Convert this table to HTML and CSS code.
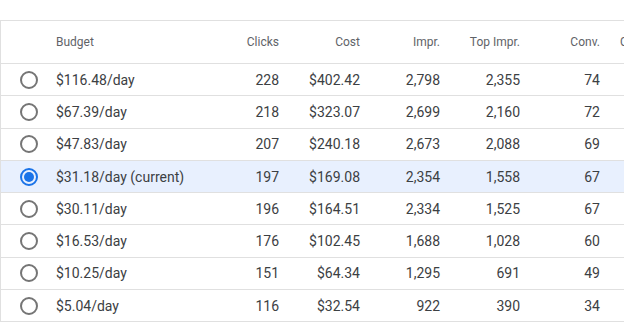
FILE: index.html
```html
<!DOCTYPE html>
<html lang="en">
<head>
    <meta charset="UTF-8">
    <title>Budget simulator</title>
    <link rel="stylesheet" href="styles.css">
</head>
<body>

<div class="card">
    <table class="budget-table">
        <colgroup>
            <col class="c-radio">
            <col class="c-budget">
            <col class="c-num">
            <col class="c-cost">
            <col class="c-num">
            <col class="c-num">
            <col class="c-num">
            <col class="c-last">
        </colgroup>
        <thead>
            <tr>
                <th></th>
                <th class="left">Budget</th>
                <th>Clicks</th>
                <th>Cost</th>
                <th>Impr.</th>
                <th>Top Impr.</th>
                <th>Conv.</th>
                <th class="left peek">Cost / conv.</th>
            </tr>
        </thead>
        <tbody>
            <tr>
                <td class="radio-cell"><svg class="radio" viewBox="0 0 20 20"><circle cx="10" cy="10" r="8"/></svg></td>
                <td class="left">$116.48/day</td>
                <td>228</td><td>$402.42</td><td>2,798</td><td>2,355</td><td>74</td><td></td>
            </tr>
            <tr>
                <td class="radio-cell"><svg class="radio" viewBox="0 0 20 20"><circle cx="10" cy="10" r="8"/></svg></td>
                <td class="left">$67.39/day</td>
                <td>218</td><td>$323.07</td><td>2,699</td><td>2,160</td><td>72</td><td></td>
            </tr>
            <tr>
                <td class="radio-cell"><svg class="radio" viewBox="0 0 20 20"><circle cx="10" cy="10" r="8"/></svg></td>
                <td class="left">$47.83/day</td>
                <td>207</td><td>$240.18</td><td>2,673</td><td>2,088</td><td>69</td><td></td>
            </tr>
            <tr class="selected">
                <td class="radio-cell"><svg class="radio checked" viewBox="0 0 20 20"><circle cx="10" cy="10" r="8"/><circle class="dot" cx="10" cy="10" r="5"/></svg></td>
                <td class="left">$31.18/day (current)</td>
                <td>197</td><td>$169.08</td><td>2,354</td><td>1,558</td><td>67</td><td></td>
            </tr>
            <tr>
                <td class="radio-cell"><svg class="radio" viewBox="0 0 20 20"><circle cx="10" cy="10" r="8"/></svg></td>
                <td class="left">$30.11/day</td>
                <td>196</td><td>$164.51</td><td>2,334</td><td>1,525</td><td>67</td><td></td>
            </tr>
            <tr>
                <td class="radio-cell"><svg class="radio" viewBox="0 0 20 20"><circle cx="10" cy="10" r="8"/></svg></td>
                <td class="left">$16.53/day</td>
                <td>176</td><td>$102.45</td><td>1,688</td><td>1,028</td><td>60</td><td></td>
            </tr>
            <tr>
                <td class="radio-cell"><svg class="radio" viewBox="0 0 20 20"><circle cx="10" cy="10" r="8"/></svg></td>
                <td class="left">$10.25/day</td>
                <td>151</td><td>$64.34</td><td>1,295</td><td>691</td><td>49</td><td></td>
            </tr>
            <tr>
                <td class="radio-cell"><svg class="radio" viewBox="0 0 20 20"><circle cx="10" cy="10" r="8"/></svg></td>
                <td class="left">$5.04/day</td>
                <td>116</td><td>$32.54</td><td>922</td><td>390</td><td>34</td><td></td>
            </tr>
        </tbody>
    </table>
</div>

</body>
</html>
```

FILE: styles.css
```css
body {
    margin: 0;
    background: #fff;
    font-family: Roboto, "Liberation Sans", Arial, sans-serif;
    overflow: hidden;
}
.card {
    margin-top: 20px;
    border-top: 1px solid #e0e0e0;
    border-left: 1px solid #e0e0e0;
    overflow: hidden;
}
.budget-table {
    border-collapse: separate;
    border-spacing: 0;
    table-layout: fixed;
    width: 684px;
}
.c-radio { width: 55px; }
.c-budget { width: 143px; }
.c-num { width: 80px; }
.c-cost { width: 81px; }
.c-last { width: 85px; }
th, td {
    padding: 0;
    text-align: right;
    white-space: nowrap;
    border-bottom: 1px solid #e0e0e0;
}
th {
    height: 42px;
    font-size: 12px;
    font-weight: 400;
    color: #5f6368;
}
td {
    height: 31.3px;
    font-size: 14px;
    color: #3c4043;
}
th.left, td.left {
    text-align: left;
}
th.peek {
    padding-left: 20px;
    overflow: hidden;
}
.radio-cell {
    text-align: center;
    line-height: 0;
}
.radio {
    width: 20px;
    height: 20px;
}
.radio circle {
    fill: none;
    stroke: #757575;
    stroke-width: 2;
}
.radio.checked circle {
    stroke: #1a73e8;
}
.radio.checked .dot {
    fill: #1a73e8;
    stroke: none;
}
tr.selected td {
    background: #e8f0fe;
}
```
